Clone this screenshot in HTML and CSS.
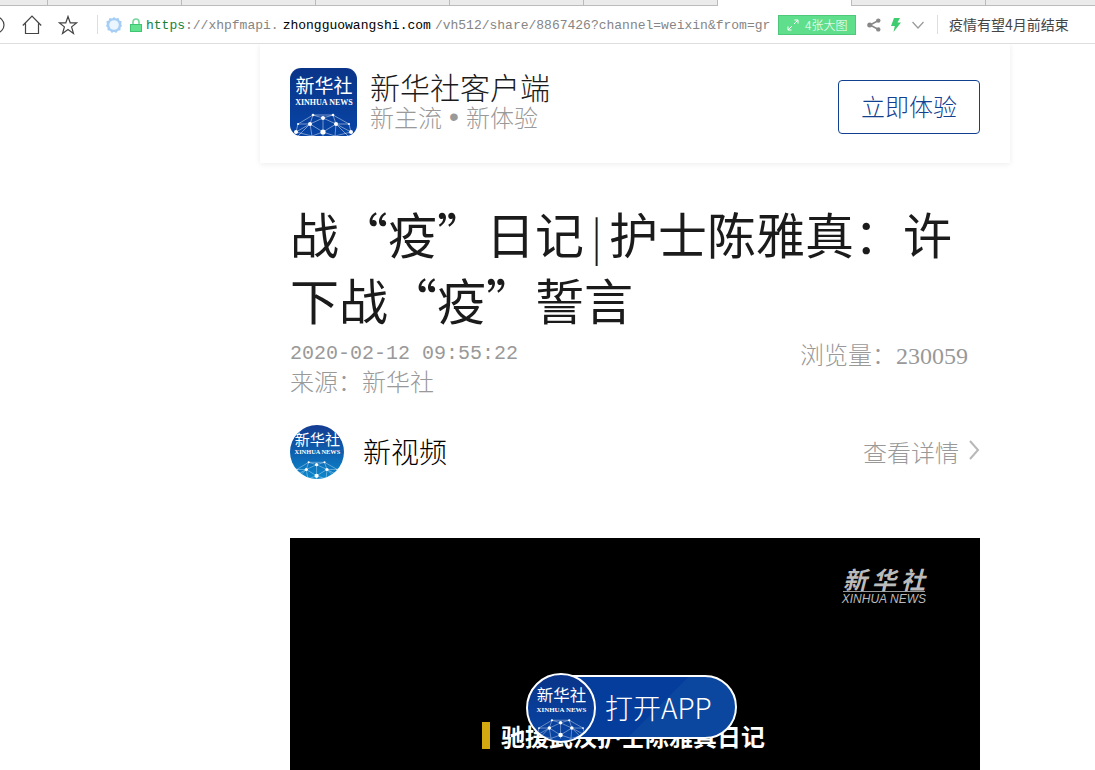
FILE: index.html
```html
<!DOCTYPE html>
<html lang="zh-CN">
<head>
<meta charset="utf-8">
<title>战“疫”日记|护士陈雅真：许下战“疫”誓言</title>
<link rel="stylesheet" href="styles.css">
</head>
<body>
<svg class="defs" aria-hidden="true">
  <defs>
    <linearGradient id="blue" x1="0" y1="0" x2="0" y2="1"><stop offset="0" stop-color="#0a3488"/><stop offset="1" stop-color="#0745a6"/></linearGradient>
    <linearGradient id="sky" x1="0" y1="0" x2="0" y2="1"><stop offset="0" stop-color="#143c92"/><stop offset=".5" stop-color="#0e5fae"/><stop offset="1" stop-color="#0b8ace"/></linearGradient>
    <symbol id="mark" viewBox="0 0 67 68">
      <text x="34" y="25" class="mark-cn">新华社</text>
      <text x="34" y="37" class="mark-en">XINHUA NEWS</text>
      <g fill="none" stroke="#fff" stroke-width=".6" opacity=".75">
        <path d="M6 64 8 56 23 47 43 47 59 56 61 64M8 56 20 56 33 50 46 56 59 56M23 47 33 50 43 47M23 47 20 56 33 64 46 56 43 47M20 56 6 64 22 68 33 64 45 68 61 64 46 56M20 56 22 68M46 56 45 68M33 50V68M20 56 8 68M46 56 58 68"/>
      </g>
      <g fill="#fff"><circle cx="23" cy="47" r="1.3"/><circle cx="43" cy="47" r="1.3"/><circle cx="33" cy="50" r="2"/><circle cx="20" cy="56" r="2"/><circle cx="46" cy="56" r="2"/><circle cx="8" cy="56" r="1"/><circle cx="59" cy="56" r="1"/><circle cx="33" cy="64" r="2.6"/><circle cx="6" cy="64" r="2"/><circle cx="61" cy="64" r="2"/></g>
    </symbol>
  </defs>
</svg>

<header class="browser">
  <div class="tabs">
    <span class="tab tab-first"></span><span class="tab"></span><span class="tab"></span><span class="tab"></span><span class="tab"></span><span class="tab"></span><span class="tab tab-active"></span><span class="tab"></span><span class="tab tab-rest"></span>
  </div>
  <div class="toolbar">
    <svg class="reload" width="5" height="20" viewBox="0 0 5 20"><circle cx="-4" cy="10" r="8" fill="none" stroke="#444" stroke-width="1.2"/></svg>
    <svg class="home" width="20" height="20" viewBox="0 0 20 20" fill="none" stroke="#444" stroke-width="1.2"><path d="M.8 10.5 10 1l9.200 9.500M3.500 8.500v10h13v-10"/></svg>
    <svg class="star" width="20" height="20" viewBox="0 0 20 20" fill="none" stroke="#444" stroke-width="1.200"><path d="m10 1.500 2.200 6.300h6.600l-5.200 4.100 1.900 6.600L10 14.600l-5.500 3.900 1.900-6.600L1.200 7.800h6.600z"/></svg>
    <span class="rule"></span>
    <svg class="gear" width="16" height="16" viewBox="0 0 16 16"><path fill="#a5cdf5" d="m8 0 1.800 1.600L12.500 1l.8 2.600 2.400.900-.600 2.500.900 2-1.500 1.500v2.700l-2.600.500L10.200 16 8 14.800 5.800 16l-1.700-2.300-2.600-.500v-2.700L0 9l.9-2-.6-2.500 2.400-.9L3.500 1l2.700.6z"/><circle cx="8" cy="8" r="4.800" fill="#eaf5ff"/></svg>
    <svg class="lock" width="12" height="14" viewBox="0 0 12 14"><path d="M3 7V4a3 3 0 0 1 6 0v3" fill="none" stroke="#77d79b" stroke-width="1.600"/><rect x=".5" y="6.500" width="11" height="7" fill="#62e28f" stroke="#3fc673"/></svg>
    <div class="url"><span class="scheme">https</span><span>://xhpfmapi.</span><span class="host">zhongguowangshi.com</span><span>/vh512/share/8867426?channel=weixin&amp;from=gr</span></div>
    <button class="pics" type="button"><svg width="12" height="12" viewBox="0 0 12 12" fill="none" stroke="#fff"><path d="M7 5 11 1M7.500 1H11v3.500M5 7 1 11M1 7.500V11h3.500"/></svg>4张大图</button>
    <div class="actions">
      <svg width="14" height="14" viewBox="0 0 14 14"><path d="M11.500 2.500 3 7l8.500 4.500" fill="none" stroke="#888" stroke-width="1.500"/><g fill="#888"><circle cx="11.300" cy="2.600" r="2.200"/><circle cx="2.700" cy="7" r="2.500"/><circle cx="11.300" cy="11.400" r="2.200"/></g></svg>
      <svg width="12" height="14" viewBox="0 0 12 14"><path fill="#3fcb70" d="M4 0h6L7.500 4.500H11L3.500 14l1.300-6H1z"/></svg>
      <svg width="14" height="14" viewBox="0 0 14 14"><path d="m1.500 4 5.500 6 5.500-6" fill="none" stroke="#999" stroke-width="1.200"/></svg>
    </div>
    <span class="rule"></span>
    <a class="hot" href="#">疫情有望4月前结束</a>
  </div>
</header>

<main class="page">
  <section class="banner">
    <svg class="app-icon" viewBox="0 0 67 68"><rect width="67" height="68" rx="11" fill="url(#blue)"/><use href="#mark" width="67" height="68"/></svg>
    <div class="app-info">
      <div class="app-name">新华社客户端</div>
      <div class="app-slogan"><span>新主流</span><span class="dot">•</span><span>新体验</span></div>
    </div>
    <button class="try" type="button">立即体验</button>
  </section>

  <article class="article">
    <h1 class="title">战“疫”日记<span class="bar">|</span>护士陈雅真：许下战“疫”誓言</h1>
    <div class="meta">
      <div><time class="date">2020-02-12 09:55:22</time><div>来源：新华社</div></div>
      <div class="views">浏览量：<span class="count">230059</span></div>
    </div>
    <div class="channel">
      <svg class="avatar" viewBox="0 0 54 54"><defs><clipPath id="round"><circle cx="27" cy="27" r="27"/></clipPath></defs><g clip-path="url(#round)"><rect width="54" height="54" fill="url(#sky)"/><use href="#mark" x="0" y="0" width="54" height="54"/></g></svg>
      <span class="channel-name">新视频</span>
      <a class="detail" href="#">查看详情<svg class="arrow" width="12" height="20" viewBox="0 0 12 20"><path d="m2 1 8 9-8 9" fill="none" stroke="#b8b8b8" stroke-width="2"/></svg></a>
    </div>
    <div class="video">
      <div class="watermark"><span class="wm-cn"><span>新</span><span>华</span><span>社</span></span><span class="wm-en">XINHUA NEWS</span></div>
      <div class="caption">驰援武汉护士陈雅真日记</div>
      <button class="open-app" type="button">
        <svg class="badge" viewBox="0 0 70 70"><defs><clipPath id="disc"><circle cx="35" cy="35" r="33"/></clipPath></defs><circle cx="35" cy="35" r="34" fill="url(#blue)" stroke="#fff" stroke-width="2"/><g clip-path="url(#disc)"><use href="#mark" x="6" y="6" width="58" height="60"/></g></svg>
        <span>打开APP</span>
      </button>
    </div>
  </article>
</main>
</body>
</html>
```
FILE: styles.css
```css
* { box-sizing: border-box; }
body {
  margin: 0;
  min-height: 100vh;
  display: flex;
  flex-direction: column;
  background: #fff;
  color: #1b1b1b;
  font-family: "Noto Sans CJK SC", sans-serif;
  font-weight: 300;
}
button { font: inherit; cursor: pointer; }
a { color: inherit; text-decoration: none; }
svg { display: block; flex: none; }
.defs { position: absolute; width: 0; height: 0; }
.mark-cn { font: 400 19px "Noto Sans CJK SC", sans-serif; fill: #fff; text-anchor: middle; }
.mark-en { font: 700 8px "Liberation Serif", serif; fill: #fff; text-anchor: middle; }

.tabs { display: flex; height: 6px; overflow: hidden; }
.tab { flex: none; width: 134px; background: #ebebeb; border-right: 1px solid #bbb; border-bottom: 1px solid #bbb; }
.tab-first { width: 48px; }
.tab-active { background: #fff; border-bottom: 0; }
.tab-rest { flex: 1; width: auto; border-right: 0; }
.toolbar {
  display: flex;
  align-items: center;
  height: 38px;
  border-bottom: 1px solid #ddd;
  overflow: hidden;
}
.home { margin-left: 17px; }
.star { margin-left: 16px; }
.rule { flex: none; width: 1px; height: 19px; background: #ddd; }
.star + .rule { margin-left: 19px; }
.gear { margin-left: 8px; }
.lock { margin-left: 8px; }
.url {
  flex: 1;
  min-width: 0;
  margin-left: 4px;
  padding-top: 2px;
  overflow: hidden;
  white-space: nowrap;
  font: 13px/20px "Liberation Mono", monospace;
  color: #858585;
}
.scheme { color: #16823a; }
.host { color: #000; padding: 0 4px; }
.pics {
  flex: none;
  display: flex;
  align-items: center;
  gap: 6px;
  width: 78px;
  height: 20px;
  padding: 0 8px;
  border: 1px solid #4fc87b;
  background: #5fdf8c;
  color: #fff;
  font-size: 12px;
  line-height: 18px;
  white-space: nowrap;
}
.actions { display: flex; gap: 9px; padding: 0 12px 0 11px; }
.hot { flex: none; width: 157px; padding: 0 0 2px 11px; font-size: 14px; line-height: 20px; font-weight: 400; color: #444; white-space: nowrap; }

.page {
  flex: 1;
  display: flex;
  flex-direction: column;
  padding: 0 85px 0 260px;
}
.banner {
  display: flex;
  align-items: flex-start;
  height: 119px;
  padding: 24px 30px 0;
  box-shadow: 0 1px 6px rgba(0, 0, 0, .08);
  clip-path: inset(0 -10px -10px);
}
.app-icon { width: 67px; height: 68px; }
.app-info { flex: 1; margin-left: 13px; padding-top: 1px; }
.app-name { font-size: 30px; line-height: 34px; }
.app-slogan { display: flex; font-size: 24px; line-height: 28px; color: #999; }
.dot { width: 24px; text-align: center; font-family: "Liberation Sans", sans-serif; font-size: 28px; }
.try {
  width: 142px;
  height: 54px;
  margin-top: 12px;
  padding: 0 0 4px;
  border: 1px solid #124091;
  border-radius: 4px;
  background: #fff;
  color: #124091;
  font-size: 24px;
}
.article { flex: 1; display: flex; flex-direction: column; padding: 37px 30px 0; }
.title { margin: 0; font-size: 49px; line-height: 66px; font-weight: 400; }
.bar { display: inline-block; width: 25px; text-align: center; font-size: 44px; line-height: 44px; font-weight: 300; }
.meta {
  display: flex;
  justify-content: space-between;
  margin-top: 8px;
  padding-right: 12px;
  font-size: 24px;
  line-height: 27px;
  color: #999;
}
.date { display: block; font-family: "Liberation Mono", monospace; font-size: 20px; }
.count { font-family: "Liberation Serif", serif; }
.channel { display: flex; align-items: center; margin-top: 31px; }
.avatar { width: 54px; height: 54px; }
.channel-name { margin-left: 19px; padding-bottom: 2px; font-size: 28px; line-height: 40px; color: #000; }
.detail {
  display: flex;
  align-items: center;
  gap: 9px;
  margin-left: auto;
  font-size: 24px;
  line-height: 36px;
  color: #999;
}
.arrow { margin-bottom: 5px; }
.video {
  position: relative;
  flex: 1;
  display: flex;
  flex-direction: column;
  justify-content: space-between;
  min-height: 232px;
  margin-top: 59px;
  padding: 28px 54px 21px 192px;
  background: #000;
}
.watermark { align-self: flex-end; display: flex; flex-direction: column; align-items: center; color: #bbb; font-style: italic; }
.wm-cn { display: flex; gap: 5px; font-size: 24px; line-height: 25px; font-weight: 700; border-bottom: 1px solid #999; }
.wm-en { font: italic 12px/14px "Liberation Sans", sans-serif; }
.caption { padding-left: 11px; border-left: 8px solid #d4a90f; color: #fff; font-size: 24px; line-height: 27px; font-weight: 700; }
.open-app {
  position: absolute;
  left: 237px;
  bottom: 31px;
  display: flex;
  align-items: center;
  width: 210px;
  height: 64px;
  padding: 0;
  border: 2px solid #fff;
  border-radius: 32px;
  background: linear-gradient(135deg, #053d9c 60%, #0b469f 60%);
  color: #fff;
  font-size: 28px;
  white-space: nowrap;
}
.badge { width: 70px; height: 70px; margin: 2px 9px 0 -3px; }
```
